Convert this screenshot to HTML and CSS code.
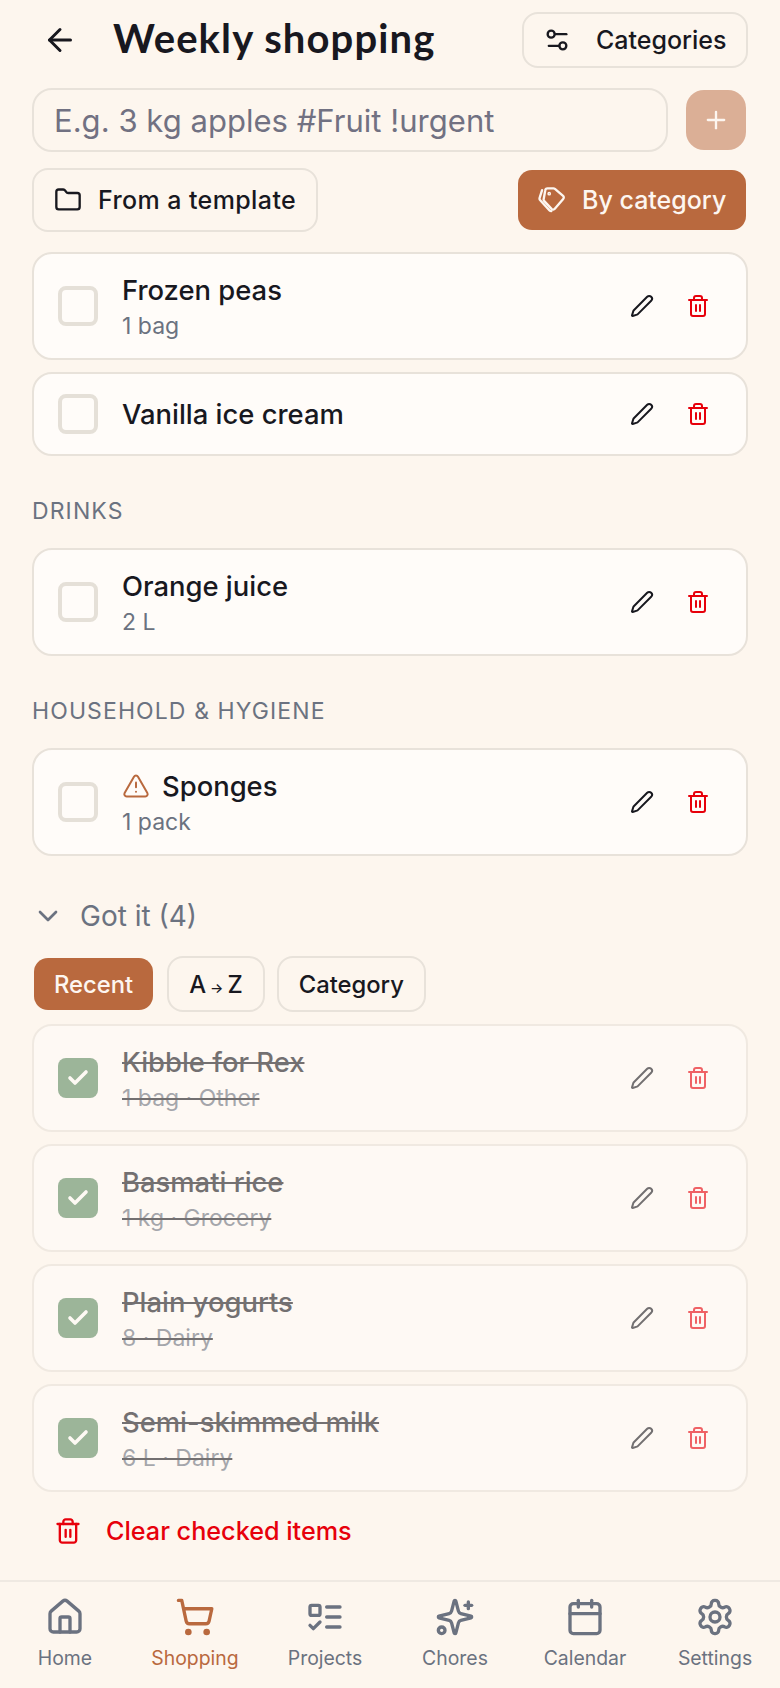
FILE: index.html
```html
<!DOCTYPE html>
<html lang="en">
<head>
<meta charset="utf-8">
<title>Weekly shopping</title>
<link rel="stylesheet" href="styles.css">
</head>
<body>
<svg class="sprite" xmlns="http://www.w3.org/2000/svg">
  <symbol id="i-back" viewBox="0 0 24 24"><path d="m12 19-7-7 7-7"/><path d="M19 12H5"/></symbol>
  <symbol id="i-sliders" viewBox="0 0 24 24"><path d="M20 7h-9"/><path d="M14 17H5"/><circle cx="17" cy="17" r="3"/><circle cx="7" cy="7" r="3"/></symbol>
  <symbol id="i-plus" viewBox="0 0 24 24"><path d="M5 12h14"/><path d="M12 5v14"/></symbol>
  <symbol id="i-folder" viewBox="0 0 24 24"><path d="M20 20a2 2 0 0 0 2-2V8a2 2 0 0 0-2-2h-7.9a2 2 0 0 1-1.69-.9L9.6 3.9A2 2 0 0 0 7.93 3H4a2 2 0 0 0-2 2v13a2 2 0 0 0 2 2Z"/></symbol>
  <symbol id="i-tags" viewBox="0 0 24 24"><path d="M8.2 2h5a2 2 0 0 1 1.3.5l7 6a1.8 1.8 0 0 1 .1 2.6l-7.2 8.5a1.8 1.8 0 0 1-2.6.2L5.4 13a2 2 0 0 1-.6-1.5L6.2 3.8A2 2 0 0 1 8.2 2z"/><path d="M3.5 3.5 1.4 10.2a2 2 0 0 0 .5 2l8 8.8a2 2 0 0 0 1.5.6"/><circle cx="9.6" cy="6.6" r=".6"/></symbol>
  <symbol id="i-pen" viewBox="0 0 24 24"><path d="M21.174 6.812a1 1 0 0 0-3.986-3.987L3.842 16.174a2 2 0 0 0-.5.83l-1.321 4.352a.5.5 0 0 0 .623.622l4.353-1.32a2 2 0 0 0 .83-.497z"/></symbol>
  <symbol id="i-trash" viewBox="0 0 24 24"><path d="M3 6h18"/><path d="M19 6v14c0 1-1 2-2 2H7c-1 0-2-1-2-2V6"/><path d="M8 6V4c0-1 1-2 2-2h4c1 0 2 1 2 2v2"/><path d="M10 11v6"/><path d="M14 11v6"/></symbol>
  <symbol id="i-alert" viewBox="0 0 24 24"><path d="m21.73 18-8-14a2 2 0 0 0-3.48 0l-8 14A2 2 0 0 0 4 21h16a2 2 0 0 0 1.73-3"/><path d="M12 9v4"/><path d="M12 17h.01"/></symbol>
  <symbol id="i-chevron" viewBox="0 0 24 24"><path d="m6 9 6 6 6-6"/></symbol>
  <symbol id="i-check" viewBox="0 0 24 24"><path d="M20 6 9 17l-5-5"/></symbol>
  <symbol id="i-home" viewBox="0 0 24 24"><path d="M15 21v-8a1 1 0 0 0-1-1h-4a1 1 0 0 0-1 1v8"/><path d="M3 10a2 2 0 0 1 .709-1.528l7-5.999a2 2 0 0 1 2.582 0l7 5.999A2 2 0 0 1 21 10v9a2 2 0 0 1-2 2H5a2 2 0 0 1-2-2z"/></symbol>
  <symbol id="i-cart" viewBox="0 0 24 24"><circle cx="8" cy="21" r="1"/><circle cx="19" cy="21" r="1"/><path d="M2.05 2.05h2l2.66 12.42a2 2 0 0 0 2 1.58h9.78a2 2 0 0 0 1.95-1.57l1.65-7.43H5.12"/></symbol>
  <symbol id="i-todo" viewBox="0 0 24 24"><rect x="3" y="5" width="6" height="6" rx="1"/><path d="m3 17 2 2 4-4"/><path d="M13 6h8"/><path d="M13 12h8"/><path d="M13 18h8"/></symbol>
  <symbol id="i-sparkles" viewBox="0 0 24 24"><path d="M9.937 15.5A2 2 0 0 0 8.5 14.063l-6.135-1.582a.5.5 0 0 1 0-.962L8.5 9.936A2 2 0 0 0 9.937 8.5l1.582-6.135a.5.5 0 0 1 .963 0L14.063 8.5A2 2 0 0 0 15.5 9.937l6.135 1.581a.5.5 0 0 1 0 .964L15.5 14.063a2 2 0 0 0-1.437 1.437l-1.582 6.135a.5.5 0 0 1-.963 0z"/><path d="M20 3v4"/><path d="M22 5h-4"/><circle cx="4" cy="20" r="2"/></symbol>
  <symbol id="i-calendar" viewBox="0 0 24 24"><path d="M8 2v4"/><path d="M16 2v4"/><rect x="3" y="4" width="18" height="18" rx="2"/><path d="M3 10h18"/></symbol>
  <symbol id="i-gear" viewBox="0 0 24 24"><path d="M12.22 2h-.44a2 2 0 0 0-2 2v.18a2 2 0 0 1-1 1.73l-.43.25a2 2 0 0 1-2 0l-.15-.08a2 2 0 0 0-2.73.73l-.22.38a2 2 0 0 0 .73 2.73l.15.1a2 2 0 0 1 1 1.72v.51a2 2 0 0 1-1 1.74l-.15.09a2 2 0 0 0-.73 2.73l.22.38a2 2 0 0 0 2.73.73l.15-.08a2 2 0 0 1 2 0l.43.25a2 2 0 0 1 1 1.73V20a2 2 0 0 0 2 2h.44a2 2 0 0 0 2-2v-.18a2 2 0 0 1 1-1.73l.43-.25a2 2 0 0 1 2 0l.15.08a2 2 0 0 0 2.73-.73l.22-.39a2 2 0 0 0-.73-2.73l-.15-.08a2 2 0 0 1-1-1.74v-.5a2 2 0 0 1 1-1.74l.15-.09a2 2 0 0 0 .73-2.73l-.22-.38a2 2 0 0 0-2.73-.73l-.15.08a2 2 0 0 1-2 0l-.43-.25a2 2 0 0 1-1-1.73V4a2 2 0 0 0-2-2z"/><circle cx="12" cy="12" r="3"/></symbol>
</svg>

<div class="app">
  <main class="content">
    <header class="topbar">
      <button class="back" aria-label="Back"><svg class="icon icon-back"><use href="#i-back"/></svg></button>
      <h1 class="title">Weekly shopping</h1>
      <button class="btn btn-categories"><svg class="icon icon-btn"><use href="#i-sliders"/></svg><span>Categories</span></button>
    </header>

    <div class="add-row">
      <div class="field">E.g. 3 kg apples #Fruit !urgent</div>
      <button class="add-btn" aria-label="Add"><svg class="icon icon-plus"><use href="#i-plus"/></svg></button>
    </div>

    <div class="tool-row">
      <button class="btn btn-template"><svg class="icon icon-btn"><use href="#i-folder"/></svg><span>From a template</span></button>
      <button class="btn btn-primary"><svg class="icon icon-btn"><use href="#i-tags"/></svg><span>By category</span></button>
    </div>

    <section class="list">
      <article class="card">
        <span class="box"></span>
        <div class="text"><div class="name">Frozen peas</div><div class="sub">1 bag</div></div>
        <div class="actions"><svg class="icon icon-act"><use href="#i-pen"/></svg><svg class="icon icon-act icon-red"><use href="#i-trash"/></svg></div>
      </article>
      <article class="card">
        <span class="box"></span>
        <div class="text"><div class="name">Vanilla ice cream</div></div>
        <div class="actions"><svg class="icon icon-act"><use href="#i-pen"/></svg><svg class="icon icon-act icon-red"><use href="#i-trash"/></svg></div>
      </article>
    </section>

    <h2 class="section-label">DRINKS</h2>
    <section class="list">
      <article class="card">
        <span class="box"></span>
        <div class="text"><div class="name">Orange juice</div><div class="sub">2 L</div></div>
        <div class="actions"><svg class="icon icon-act"><use href="#i-pen"/></svg><svg class="icon icon-act icon-red"><use href="#i-trash"/></svg></div>
      </article>
    </section>

    <h2 class="section-label">HOUSEHOLD &amp; HYGIENE</h2>
    <section class="list">
      <article class="card">
        <span class="box"></span>
        <div class="text"><div class="name name-flag"><svg class="icon icon-alert"><use href="#i-alert"/></svg><span>Sponges</span></div><div class="sub">1 pack</div></div>
        <div class="actions"><svg class="icon icon-act"><use href="#i-pen"/></svg><svg class="icon icon-act icon-red"><use href="#i-trash"/></svg></div>
      </article>
    </section>

    <div class="got-it"><svg class="icon icon-chevron"><use href="#i-chevron"/></svg><span>Got it (4)</span></div>

    <div class="chips">
      <button class="chip chip-on">Recent</button>
      <button class="chip">A<span class="arrow">→</span>Z</button>
      <button class="chip">Category</button>
    </div>

    <section class="list">
      <article class="card card-done">
        <span class="box box-on"><svg class="icon icon-check"><use href="#i-check"/></svg></span>
        <div class="text text-done"><div class="name">Kibble for Rex</div><div class="sub">1 bag · Other</div></div>
        <div class="actions"><svg class="icon icon-act"><use href="#i-pen"/></svg><svg class="icon icon-act icon-red"><use href="#i-trash"/></svg></div>
      </article>
      <article class="card card-done">
        <span class="box box-on"><svg class="icon icon-check"><use href="#i-check"/></svg></span>
        <div class="text text-done"><div class="name">Basmati rice</div><div class="sub">1 kg · Grocery</div></div>
        <div class="actions"><svg class="icon icon-act"><use href="#i-pen"/></svg><svg class="icon icon-act icon-red"><use href="#i-trash"/></svg></div>
      </article>
      <article class="card card-done">
        <span class="box box-on"><svg class="icon icon-check"><use href="#i-check"/></svg></span>
        <div class="text text-done"><div class="name">Plain yogurts</div><div class="sub">8 · Dairy</div></div>
        <div class="actions"><svg class="icon icon-act"><use href="#i-pen"/></svg><svg class="icon icon-act icon-red"><use href="#i-trash"/></svg></div>
      </article>
      <article class="card card-done">
        <span class="box box-on"><svg class="icon icon-check"><use href="#i-check"/></svg></span>
        <div class="text text-done"><div class="name">Semi-skimmed milk</div><div class="sub">6 L · Dairy</div></div>
        <div class="actions"><svg class="icon icon-act"><use href="#i-pen"/></svg><svg class="icon icon-act icon-red"><use href="#i-trash"/></svg></div>
      </article>
    </section>

    <button class="clear"><svg class="icon icon-clear"><use href="#i-trash"/></svg><span>Clear checked items</span></button>
  </main>

  <nav class="tabbar">
    <a class="tab"><svg class="icon icon-tab"><use href="#i-home"/></svg><span>Home</span></a>
    <a class="tab tab-on"><svg class="icon icon-tab"><use href="#i-cart"/></svg><span>Shopping</span></a>
    <a class="tab"><svg class="icon icon-tab"><use href="#i-todo"/></svg><span>Projects</span></a>
    <a class="tab"><svg class="icon icon-tab"><use href="#i-sparkles"/></svg><span>Chores</span></a>
    <a class="tab"><svg class="icon icon-tab"><use href="#i-calendar"/></svg><span>Calendar</span></a>
    <a class="tab"><svg class="icon icon-tab"><use href="#i-gear"/></svg><span>Settings</span></a>
  </nav>
</div>
</body>
</html>
```

FILE: styles.css
```css
* { box-sizing: border-box; }
html, body { margin: 0; padding: 0; }
body {
  background: #fdf6ee;
  color: #18181f;
  font-family: "Inter", "Liberation Sans", sans-serif;
  width: 780px;
  height: 1688px;
  overflow: hidden;
}
button { font: inherit; color: inherit; background: none; border: 0; padding: 0; }
.sprite { display: none; }
.icon {
  display: block;
  flex: none;
  fill: none;
  stroke: currentColor;
  stroke-width: 2;
  stroke-linecap: round;
  stroke-linejoin: round;
}
.app { display: flex; flex-direction: column; height: 1688px; }
.content { flex: 1; padding: 12px 32px 0; display: flex; flex-direction: column; }

.topbar { display: flex; align-items: center; height: 56px; }
.back { width: 48px; height: 48px; margin-left: 4px; display: flex; align-items: center; justify-content: center; }
.icon-back { width: 36px; height: 36px; }
.title {
  margin: 0 0 4px 29px;
  font-family: "Lato", sans-serif;
  font-size: 40px;
  font-weight: 700;
  letter-spacing: 1.1px;
  line-height: 52px;
  flex: 1;
}
.btn {
  display: flex;
  align-items: center;
  height: 64px;
  border: 2px solid #e8e2da;
  border-radius: 16px;
  font-size: 25px;
  font-weight: 500;
  white-space: nowrap;
}
.icon-btn { width: 28px; height: 28px; }
.btn-categories { width: 226px; height: 56px; padding: 0 19px; gap: 25px; }

.add-row { display: flex; align-items: center; gap: 16px; margin-top: 20px; }
.field {
  flex: 1;
  height: 64px;
  border: 2px solid #e8e2da;
  border-radius: 20px;
  padding: 0 20px;
  display: flex;
  align-items: center;
  font-size: 31px;
  letter-spacing: .03px;
  color: #717182;
}
.add-btn {
  width: 64px;
  height: 64px;
  border: 2px solid transparent;
  border-radius: 20px;
  background: #dbaf96 padding-box;
  color: #fdf6f0;
  display: flex;
  align-items: center;
  justify-content: center;
}
.icon-plus { width: 28px; height: 28px; }

.tool-row { display: flex; justify-content: space-between; margin-top: 16px; }
.btn-template { width: 286px; padding: 0 20px; gap: 16px; letter-spacing: .4px; }
.btn-primary {
  width: 232px;
  padding: 0 20px;
  gap: 16px;
  border-color: transparent;
  background: #b9693e padding-box;
  color: #fdf6f0;
}

.list { display: flex; flex-direction: column; gap: 12px; margin-top: 20px; }
.card {
  display: flex;
  align-items: center;
  padding: 16px 24px;
  background: #fffcf9;
  border: 2px solid #e8e2da;
  border-radius: 20px;
}
.card-done { opacity: .6; }
.box {
  flex: none;
  width: 40px;
  height: 40px;
  border: 4px solid #e5e0d8;
  border-radius: 8px;
  display: flex;
  align-items: center;
  justify-content: center;
}
.box-on { border: 0; background: #5d8a62; color: #fffcf9; }
.icon-check { width: 24px; height: 24px; stroke-width: 3.6; }
.text { flex: 1; margin-left: 24px; min-width: 0; }
.name { font-size: 27.4px; font-weight: 500; line-height: 40px; }
.name-flag { display: flex; align-items: center; gap: 12px; }
.icon-alert { width: 28px; height: 28px; color: #b9693e; stroke-width: 1.7; }
.sub { font-size: 23px; line-height: 30px; margin: 1px 0; color: #6b7280; }
.text-done { text-decoration: line-through; }
.actions { flex: none; display: flex; align-items: center; gap: 32px; height: 48px; margin-right: 12px; }
.icon-act { width: 24px; height: 24px; }
.icon-red { color: #e7000b; }

.section-label {
  margin: 40px 0 0;
  font-size: 23px;
  font-weight: 400;
  line-height: 30px;
  letter-spacing: 1.1px;
  color: #6b7280;
}
.section-label + .list { margin-top: 22px; }

.got-it {
  display: flex;
  align-items: center;
  height: 40px;
  margin-top: 40px;
  font-size: 28px;
  color: #6b7280;
  gap: 16px;
}
.icon-chevron { width: 32px; height: 32px; }
.chips { display: flex; gap: 12px; margin-top: 20px; }
.chip {
  height: 56px;
  padding: 0 20px;
  border: 2px solid #e8e2da;
  border-radius: 16px;
  font-size: 23.8px;
  font-weight: 500;
}
.chip-on { border-color: transparent; background: #b9693e padding-box; color: #fdf6f0; }
.arrow { font-size: 14px; margin: 0 4px; }
.chips + .list { margin-top: 12px; }

.clear {
  display: flex;
  align-items: center;
  gap: 24px;
  margin-top: 19px;
  margin-left: 22px;
  height: 40px;
  color: #e7000b;
  font-size: 25.2px;
  font-weight: 500;
}
.icon-clear { width: 28px; height: 28px; }

.tabbar {
  flex: none;
  display: grid;
  grid-template-columns: repeat(6, 130px);
  height: 108px;
  border-top: 2px solid #efe9e2;
  padding-top: 15px;
}
.tab {
  display: flex;
  flex-direction: column;
  align-items: center;
  font-size: 19.4px;
  line-height: 28px;
  color: #6b7280;
}
.tab-on { color: #b9693e; }
.icon-tab { width: 40px; height: 40px; margin-bottom: 7px; }
```
